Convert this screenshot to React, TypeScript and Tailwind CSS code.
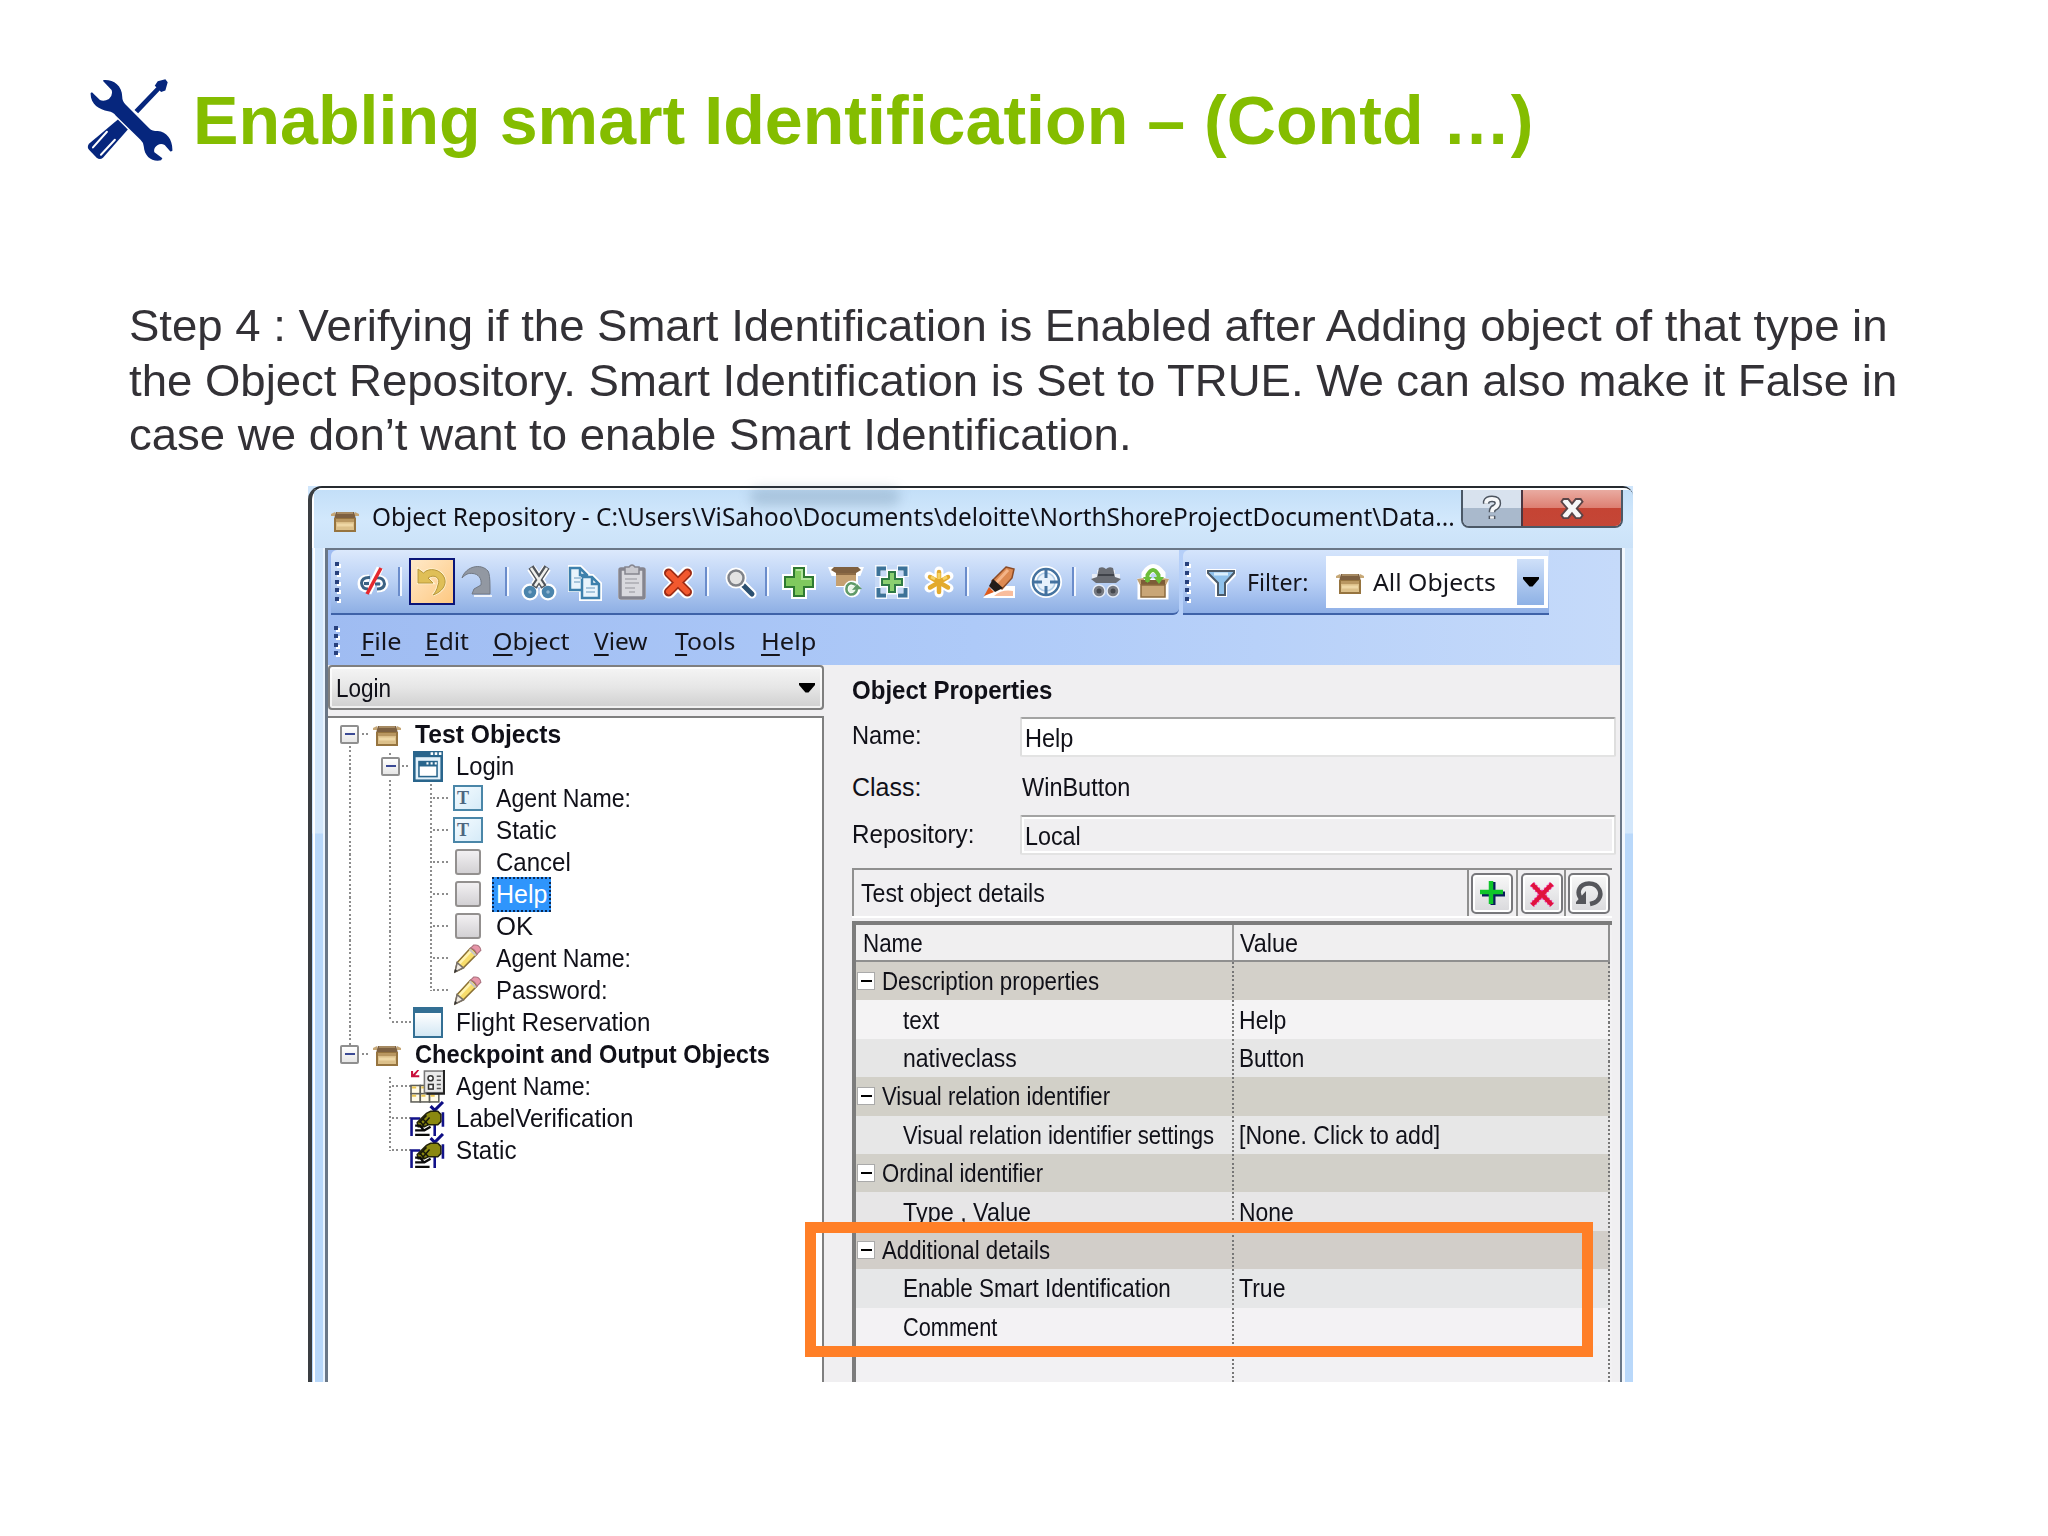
import React, { useLayoutEffect, useRef, useState } from 'react';

/** Text condensed or widened horizontally so that its advance equals `w`. */
function Fit({ w, children, className = '' }: { w: number; children: React.ReactNode; className?: string }) {
  const ref = useRef<HTMLSpanElement>(null);
  const [scale, setScale] = useState(1);
  useLayoutEffect(() => {
    if (ref.current) setScale(w / ref.current.offsetWidth);
  }, [w]);
  return (
    <span className={'block shrink-0 whitespace-pre ' + className} style={{ width: w }}>
      <span ref={ref} className="inline-block origin-left" style={{ transform: `scaleX(${scale})` }}>
        {children}
      </span>
    </span>
  );
}

const Glyph = ({ children }: { children: React.ReactNode }) => (
  <div className="flex w-[46.500px] shrink-0 justify-center">
    <svg viewBox="0 0 34 34" className="h-[34px] w-[34px] overflow-visible">{children}</svg>
  </div>
);

const Sep = ({ className = 'w-[14px]' }: { className?: string }) => (
  <div className={'flex h-[29px] shrink-0 justify-center ' + className}>
    <div className="mr-[4px] w-[4px] border-l-2 border-[#6a8ccb] bg-[#f1f6fe]" />
  </div>
);

const Grip = ({ n }: { n: number }) => (
  <div className="flex shrink-0 flex-col gap-[4.600px]">
    {Array.from({ length: n }, (_, i) => (
      <div key={i} className="h-[4px] w-[4px] bg-[#27407c] shadow-[2px_2px_0_#fff]" />
    ))}
  </div>
);

function Crate({ className = '' }: { className?: string }) {
  return (
    <svg viewBox="0 0 30 22" className={'h-[22px] w-[30px] shrink-0 ' + className}>
      <path d="M5 1L1 3V5H6ZM25 1L29 3V5H24Z" fill="#c7a877" />
      <path d="M6 1H24L26 8H4Z" fill="#7d6142" />
      <path d="M7 2H23" stroke="#a68a62" strokeWidth="2" />
      <rect x="4" y="7" width="22" height="14" fill="#96743f" />
      <rect x="6" y="8" width="18" height="11" fill="#dcc08a" />
      <path d="M6 9.500H24" stroke="#b99761" strokeWidth="3" />
      <path d="M7 14H23" stroke="#eed7a5" strokeWidth="3" />
    </svg>
  );
}

const Arrow = () => (
  <svg viewBox="0 0 16 10" className="h-[10px] w-[16px]">
    <path d="M0 0H16V2L9.5 9.5H6.5L0 2Z" fill="#000" />
  </svg>
);

function ToolsLogo() {
  return (
    <svg viewBox="50 55 260 250" className="h-[83px] w-[87px]" fill="#06267d">
      <path d="M98 58C125 55 155 72 155 108Q155 122 165 132L237 204Q245 212 262 212C290 214 308 240 306 272L300 273L283 254Q272 247 262 254Q248 263 252 276L276 294L272 300C245 306 222 288 220 258Q219 246 210 238L136 166Q128 154 113 152C85 148 58 130 60 97L64 95L88 118Q100 124 115 115Q128 103 123 88L98 62Z" />
      <path d="M192 148L258 80L253 75L262 62L285 56L292 65L285 90L272 94L268 90L203 158Z" />
      <path d="M142 177L172 207L97 292Q88 300 78 292L55 268Q48 260 55 250Z" />
      <path d="M67 261L109 214M91 283L133 238" stroke="#fff" strokeWidth="6" strokeLinecap="round" />
    </svg>
  );
}

function Toolbar() {
  return (
    <div className="flex h-[65px] w-[848px] items-center rounded-tl-[6px] rounded-br-[6px] border-b-2 border-[#3e62a8] bg-linear-to-b from-[#dce9fc] via-[#b9d0f4] to-[#8eafe4] pl-[4px]">
      <Grip n={5} />
      <div className="w-[10.500px] shrink-0" />
      <Glyph>
        <g fill="none" stroke="#fff" strokeWidth="7"><path d="M13 13Q5 13 5 19Q5 24 12 24M21 13Q29 14 29 19Q28 24 21 24M12 28L24 3" /></g>
        <g fill="none" stroke="#3b6284" strokeWidth="3"><path d="M14 12.5Q6 12 5.5 18Q6 24 12 24M8 18.5H13M20 13Q28 12 28.500 19Q28 24 21 24M19 19H24" /></g>
        <path d="M11 29L25 3" stroke="#e5282e" strokeWidth="3.500" />
      </Glyph>
      <Sep className="w-[12.5px]" />
      <div className="flex h-[47px] w-[46.500px] shrink-0 items-center justify-center border-2 border-[#0a1478] bg-linear-to-br from-[#ffe9c8] to-[#fdc880]">
        <svg viewBox="0 0 34 34" className="h-[34px] w-[34px]">
          <path d="M3 4V18H18L13 13C20 8 26 14 23 20C22 25 20 28 18 30C27 27 32 20 29.500 13C26 4 14 2 8.500 8Z" fill="#e2c35c" stroke="#fff3d2" strokeWidth="2.500" />
          <path d="M3 4V18H18L13 13C20 8 26 14 23 20C22 25 20 28 18 30C27 27 32 20 29.500 13C26 4 14 2 8.500 8Z" fill="#dfbf57" stroke="#b8963a" strokeWidth="1" />
        </svg>
      </div>
      <Glyph>
        <path d="M1 13C5 1 20 -2 27 6Q29 9 29 22V29H11L13 24L20 20C21 13 17 9 12 8.500C7 8 5 9 1 13Z" fill="#9298a2" stroke="#727984" />
        <path d="M13 31H31" stroke="#eef3fb" strokeWidth="2" />
      </Glyph>
      <Sep />
      <Glyph>
        <path d="M9 3L21 20M25 3L13 20" stroke="#fff" strokeWidth="9" />
        <g fill="none" stroke="#fff" strokeWidth="9"><circle cx="8" cy="27" r="4" /><circle cx="26" cy="27" r="4" /></g>
        <path d="M9 2L22 22M25 2L12 22" stroke="#50545a" strokeWidth="6" />
        <path d="M9 3L21 21M25 3L13 21" stroke="#f0f0ec" strokeWidth="2.500" />
        <g fill="#8fb4d0" stroke="#4a84ac" strokeWidth="4.500"><circle cx="8" cy="27" r="4" /><circle cx="26" cy="27" r="4" /></g>
      </Glyph>
      <Glyph>
        <g fill="#eaf5fd" stroke="#fff" strokeWidth="6"><path d="M3 3H12L19 10V24H3ZM14 12H24L31 19V33H14Z" /></g>
        <g fill="#e8f4fc" stroke="#3d80ac" strokeWidth="2.500"><path d="M2 3H12L19 10V25H2ZM12 3V10H19" /><path d="M14 12H24L31 19V33H14ZM24 12V19H31" /></g>
        <path d="M6 13H14M6 17H12M18 23H27M18 27H27" stroke="#a7c6dc" strokeWidth="2" />
      </Glyph>
      <Glyph>
        <rect x="3" y="3" width="28" height="32" rx="3" fill="#eef2f9" />
        <rect x="5" y="4" width="24" height="29" rx="1" fill="#d9d9de" stroke="#85858f" strokeWidth="3.500" />
        <path d="M10 2H14Q17 -2 20 2H24V9H10Z" fill="#c9c9cf" stroke="#85858f" strokeWidth="1.500" />
        <path d="M10 14H22M10 18H24M10 23H20M14 27H20" stroke="#aaaab1" strokeWidth="1.500" />
      </Glyph>
      <Glyph>
        <path d="M8 8L26 27M26 8L8 27" stroke="#fff" strokeWidth="13" strokeLinecap="round" />
        <path d="M7.500 8L26.500 27M26.500 8L7.500 27" stroke="#9c2c16" strokeWidth="9" strokeLinecap="round" />
        <path d="M8 8.500L26 26.500M26 8.500L8 26.500" stroke="#f2582e" strokeWidth="6" strokeLinecap="round" />
      </Glyph>
      <Sep />
      <Glyph>
        <path d="M20 19L30 29" stroke="#fff" strokeWidth="9" strokeLinecap="round" />
        <path d="M20 19L30 29" stroke="#2c5070" strokeWidth="5" strokeLinecap="round" />
        <circle cx="14" cy="13" r="10.500" fill="#fff" />
        <circle cx="14" cy="13" r="7.500" fill="#e3e3e3" stroke="#7f8288" strokeWidth="2.500" />
      </Glyph>
      <Sep />
      <Glyph>
        <path d="M11.500 2.500H22.500V11.500H31.500V22.500H22.500V31.500H11.500V22.500H2.500V11.500H11.500Z" fill="#fff" stroke="#fff" strokeWidth="5" />
        <path d="M12 3H22V12H31V22H22V31H12V22H3V12H12Z" fill="#80c95e" stroke="#2f7a31" strokeWidth="2" />
        <path d="M14 5H20V14H29" fill="none" stroke="#b3e59c" strokeWidth="2" />
      </Glyph>
      <Glyph>
        <path d="M2 4L32 4L30 9H27V20H9V9H4Z" fill="#fff" stroke="#fff" strokeWidth="4" />
        <path d="M5 2H29L32 5L27 8H7L2 5Z" fill="#7f6040" />
        <rect x="7" y="8" width="20" height="13" fill="#c5a071" />
        <path d="M7 9H27" stroke="#8d6b45" strokeWidth="2" />
        <circle cx="23" cy="24" r="6" fill="#eaf5e7" stroke="#fff" strokeWidth="5" />
        <path d="M27 20Q21 16 18 21Q16 27 21 29.500Q27 30 28 24" fill="none" stroke="#5f9a68" strokeWidth="2.500" />
        <path d="M23 25L33 24L28 19Z" fill="#5f9a68" />
      </Glyph>
      <Glyph>
        <rect x="0" y="0" width="34" height="34" fill="#f2f7fe" />
        <path d="M12 0H22V6H28V12H34V22H28V28H22V34H12V28H6V22H0V12H6V6H12Z" fill="#c6d9f6" />
        <path d="M3.500 11V3.500H11M23 3.500H30.500V11M30.500 23V30.500H23M11 30.500H3.500V23" fill="none" stroke="#3c7298" strokeWidth="4" />
        <path d="M14 7H20V14H27V20H20V27H14V20H7V14H14Z" fill="#8bd070" stroke="#fff" strokeWidth="5" />
        <path d="M14 7H20V14H27V20H20V27H14V20H7V14H14Z" fill="#8bd070" stroke="#2f7a45" strokeWidth="2" />
      </Glyph>
      <Glyph>
        <path d="M17 6V28M7 11L27 23M27 11L7 23" stroke="#fff" strokeWidth="9" strokeLinecap="round" />
        <path d="M17 7V27M8 12L26 22.500M26 12L8 22.500" stroke="#e3aa2c" strokeWidth="4.500" strokeLinecap="round" />
        <path d="M17 8V14M9 12L13 14M25 12L21 14" stroke="#f6d264" strokeWidth="3" />
      </Glyph>
      <Sep />
      <Glyph>
        <path d="M1 33L12 21H33V33Z" fill="#fff" />
        <path d="M12 31Q20 24 31 26V31Z" fill="#f9bd9d" />
        <path d="M24 2L32 4L30 13L20 24L10 16Z" fill="#dd8a52" stroke="#8b4b27" strokeWidth="1.500" />
        <path d="M26 5L14 18" stroke="#f4b487" strokeWidth="3" />
        <path d="M11 14L21 23L13 27L7 21Z" fill="#221c18" />
        <path d="M7 22L12 27L2 31Z" fill="#e05b1c" />
      </Glyph>
      <Glyph>
        <circle cx="17" cy="17" r="13" fill="#e6f1fc" stroke="#fff" strokeWidth="6" />
        <circle cx="17" cy="17" r="13" fill="none" stroke="#44729f" strokeWidth="2.500" />
        <circle cx="17" cy="17" r="9" fill="none" stroke="#b3cfe9" strokeWidth="1.500" />
        <path d="M17 4V13M17 21V30M4 17H13M21 17H30" stroke="#44729f" strokeWidth="3" />
      </Glyph>
      <Sep />
      <Glyph>
        <path d="M3 12H31M8 8H26" stroke="#e9eef7" strokeWidth="6" />
        <path d="M8 12L10 3Q14 1 17 4Q20 1 24 3L26 12L32 14L27 18H7L2 14Z" fill="#696c72" />
        <path d="M9 10H25" stroke="#3f4248" strokeWidth="2" />
        <g fill="#777a81" stroke="#e4ebf6" strokeWidth="1.500"><circle cx="10" cy="26" r="6" /><circle cx="24" cy="26" r="6" /></g>
        <g fill="#45484e"><circle cx="10" cy="26" r="2.500" /><circle cx="24" cy="26" r="2.500" /></g>
      </Glyph>
      <Glyph>
        <path d="M3 15H31V33H3Z" fill="#fff" stroke="#fff" strokeWidth="3" />
        <path d="M10 18V9Q17 -2 25 9V17" fill="none" stroke="#fff" strokeWidth="9" />
        <path d="M1 14L8 13V20H4ZM33 14L26 13V20H30Z" fill="#c3a170" />
        <rect x="5" y="15" width="24" height="6" fill="#7d5c38" />
        <path d="M11.500 17V10Q17 0 22.500 10V14" fill="none" stroke="#6cbd3a" strokeWidth="4" />
        <path d="M17.500 12H28L23 19ZM7 12H16L11.500 18Z" fill="#6cbd3a" />
        <rect x="5" y="20" width="24" height="12" fill="#c9a677" stroke="#8b6a3e" strokeWidth="1.500" />
      </Glyph>
    </div>
  );
}

function FilterBar() {
  return (
    <div className="ml-[4px] flex h-[65px] w-[366px] items-center rounded-tl-[6px] border-b-2 border-[#3e62a8] bg-linear-to-b from-[#d5e5fc] via-[#b9d0f6] to-[#8eafe6] pl-[2px]">
      <Grip n={5} />
      <svg viewBox="0 0 30 28" className="ml-[17px] mt-[3px] h-[28px] w-[30px] overflow-visible">
        <path d="M2 2H28V6L19 15V26H11V15L2 6Z" fill="#fff" stroke="#fff" strokeWidth="4" />
        <path d="M2 2H28V4L19 14V26H12V14L2 4Z" fill="#8fc2ec" stroke="#4b5a68" strokeWidth="2" />
        <path d="M8 5H22" stroke="#d9effd" strokeWidth="3" />
      </svg>
      <Fit w={61} className="ml-[11px]">Filter:</Fit>
      <div className="ml-[18px] flex h-[52px] w-[222px] items-center bg-white">
        <Crate className="mt-[4px] ml-[9px]" />
        <Fit w={123} className="ml-[8px]">All Objects</Fit>
        <div className="ml-[21px] flex h-[46px] w-[27px] shrink-0 items-center justify-center bg-linear-to-b from-[#cfe0f9] to-[#8eb1e5]"><Arrow /></div>
      </div>
    </div>
  );
}

const menus: [string, number, string][] = [
  ['File', 40, 'ml-[23px]'],
  ['Edit', 44, 'ml-[24px]'],
  ['Object', 76, 'ml-[24px]'],
  ['View', 54, 'ml-[25px]'],
  ['Tools', 60, 'ml-[27px]'],
  ['Help', 55, 'ml-[26px]'],
];

const Minus = () => (
  <div className="flex h-[19px] w-[19px] shrink-0 items-center justify-center rounded-[2px] border-2 border-[#8f8f8f] bg-linear-to-b from-white to-[#e6e6e6]">
    <div className="h-[2px] w-[10px] bg-[#3b4a95]" />
  </div>
);

const DialogIcon = () => (
  <svg viewBox="0 0 29 30" className="h-[31px] w-[30px] shrink-0">
    <rect width="29" height="30" fill="#29658c" />
    <path d="M17 2.500h2.500M21 2.500h2.500M25 2.500h2.500" stroke="#fff" strokeWidth="2.500" />
    <rect x="2.500" y="6" width="24" height="21.500" fill="#e4f2fb" />
    <rect x="5" y="9.500" width="19" height="16" fill="#29658c" />
    <rect x="6.500" y="15" width="16" height="9" fill="#fff" />
    <path d="M13 12h2M17 12h2M21 12h2" stroke="#fff" strokeWidth="2" />
  </svg>
);
const WindowIcon = () => (
  <div className="h-[31px] w-[30px] shrink-0 border-2 border-t-[6px] border-[#336f94] bg-linear-to-b from-white to-[#d3e7f4]" />
);
const TextIcon = () => (
  <div className="flex h-[26px] w-[30px] shrink-0 items-center border-2 border-[#4a86a8] bg-linear-to-br from-[#f4fbff] to-[#d6ebf8] pl-[2px] font-['Liberation_Serif',serif] text-[18px] leading-none font-bold text-[#4d6680]">
    T
  </div>
);
const ButtonIcon = () => (
  <div className="mr-[2px] ml-[2px] h-[26px] w-[26px] shrink-0 rounded-[3px] border-2 border-[#93908f] bg-linear-to-b from-[#f2f0f2] to-[#d3d1d4]" />
);
const PencilIcon = () => (
  <svg viewBox="0 0 29 30" className="h-[31px] w-[30px] shrink-0">
    <path d="M2 28L4 19L17 5Q21 6 23 11L10 24Z" fill="#f8dd6c" stroke="#8b7135" strokeWidth="1.500" />
    <path d="M6 20L18 7" stroke="#fff3b0" strokeWidth="2.500" />
    <path d="M2 28L4 19L10 24Z" fill="#f3ece2" stroke="#77706a" strokeWidth="1.500" />
    <path d="M1 29L4 27L2 25Z" fill="#333" />
    <path d="M17 5L20 2Q26 1 27 7L23 11Q22 6 17 5Z" fill="#e795a8" stroke="#a9707d" />
    <path d="M16 6L22 12" stroke="#c9c6c6" strokeWidth="2" />
  </svg>
);
const OutputIcon = () => (
  <svg viewBox="0 0 34 32" className="h-[33px] w-[35px] shrink-0">
    <path d="M1 7V1H3V4L7 0H9L5 5H9V7Z" fill="#c90f3c" />
    <g fill="#fffbe9" stroke="#5e5e58" strokeWidth="1.500"><rect x="1" y="15" width="9" height="8" /><rect x="10" y="15" width="9" height="8" /><rect x="1" y="23" width="9" height="8" /><rect x="10" y="23" width="9" height="8" /><rect x="19" y="23" width="9" height="8" /></g>
    <path d="M2 17H6M11 17H15M2 25H6M11 25H15M20 25H24" stroke="#ecc64e" strokeWidth="2" />
    <rect x="14" y="1" width="19" height="21" fill="#e9e9e9" stroke="#777" strokeWidth="1.500" />
    <path d="M33 0V23H16" fill="none" stroke="#222" strokeWidth="2" />
    <g fill="#fff" stroke="#333" strokeWidth="1.500"><circle cx="20" cy="8" r="2.500" /><rect x="18" y="14" width="4.500" height="4.500" /></g>
    <path d="M26 6H30M26 10H30M26 14H30M26 18H30" stroke="#555" strokeWidth="1.500" />
  </svg>
);
const CheckIcon = () => (
  <svg viewBox="0 0 34 34" className="h-[35px] w-[35px] shrink-0">
    <path d="M20 5L24 9L32 1" fill="none" stroke="#0d0d84" strokeWidth="3" />
    <path d="M10 17H1.500V34M24 21V34M32 11V25" fill="none" stroke="#12128a" strokeWidth="2.500" />
    <path d="M7 21L16 12L20 10H27L30 13V20L27 23H18L14 25H8Z" fill="#8a8810" stroke="#24240a" strokeWidth="1.500" />
    <path d="M9 21L16 14M12 24L19 16M12 17L18 23M10 20L14 25" stroke="#17170a" strokeWidth="1.500" />
    <path d="M5 24H10L13 28M5 28.500H14L20 25M5 33H19" fill="none" stroke="#0a0a0a" strokeWidth="2.200" />
  </svg>
);

type Node = { level: 0 | 1 | 2; icon: React.ReactNode; text: string; w: number; toggle?: boolean; bold?: boolean; selected?: boolean };
const tree: Node[] = [
  { level: 0, toggle: true, icon: <Crate />, text: 'Test Objects', w: 146, bold: true },
  { level: 1, toggle: true, icon: <DialogIcon />, text: 'Login', w: 58 },
  { level: 2, icon: <TextIcon />, text: 'Agent Name:', w: 135 },
  { level: 2, icon: <TextIcon />, text: 'Static', w: 61 },
  { level: 2, icon: <ButtonIcon />, text: 'Cancel', w: 75 },
  { level: 2, icon: <ButtonIcon />, text: 'Help', w: 51, selected: true },
  { level: 2, icon: <ButtonIcon />, text: 'OK', w: 37 },
  { level: 2, icon: <PencilIcon />, text: 'Agent Name:', w: 135 },
  { level: 2, icon: <PencilIcon />, text: 'Password:', w: 112 },
  { level: 1, icon: <WindowIcon />, text: 'Flight Reservation', w: 194 },
  { level: 0, toggle: true, icon: <Crate />, text: 'Checkpoint and Output Objects', w: 355, bold: true },
  { level: 1, icon: <OutputIcon />, text: 'Agent Name:', w: 135 },
  { level: 1, icon: <CheckIcon />, text: 'LabelVerification', w: 177 },
  { level: 1, icon: <CheckIcon />, text: 'Static', w: 61 },
];

const dotsY = 'absolute w-[2px] bg-[repeating-linear-gradient(to_bottom,#8d8d8d_0_2px,transparent_2px_4.300px)] ';
const dotsX = 'h-[2px] shrink-0 bg-[repeating-linear-gradient(to_right,#8d8d8d_0_2px,transparent_2px_4.300px)] ';

/** Everything left of a row's icon: the expander box and the dotted connector. */
function Lead({ n }: { n: Node }) {
  if (n.level === 0)
    return <div className="flex w-[44px] shrink-0 items-center pl-[12px]"><Minus /><div className={dotsX + 'ml-[3px] w-[7px]'} /></div>;
  if (n.level === 1)
    return (
      <div className="flex w-[85px] shrink-0 items-center pl-[53px]">
        {n.toggle ? <><Minus /><div className={dotsX + 'ml-[2px] w-[9px]'} /></> : <div className={dotsX + 'ml-[11px] w-[19px]'} />}
      </div>
    );
  return <div className="flex w-[125px] shrink-0 items-center pl-[105px]"><div className={dotsX + 'w-[17px]'} /></div>;
}

function TreeRow({ n }: { n: Node }) {
  return (
    <div className="flex h-[32.040px] items-center">
      <Lead n={n} />
      <div className={n.level === 0 ? 'w-[43px] shrink-0 pt-[4px]' : 'w-[43px] shrink-0'}>
        <div className={n.level === 1 && !n.toggle && n.text !== 'Flight Reservation' ? '-ml-[3px] flex' : 'flex'}>{n.icon}</div>
      </div>
      {n.selected ? (
        <div className="-ml-[4px] flex h-[35px] shrink-0 items-center bg-[#2f95fc] pl-[4px] pr-[4px] text-white outline-2 -outline-offset-2 outline-dotted outline-[#0a2a55]">
          <Fit w={n.w}>{n.text}</Fit>
        </div>
      ) : (
        <Fit w={n.w} className={n.bold ? 'font-bold' : ''}>{n.text}</Fit>
      )}
    </div>
  );
}

type Row = { name: string; w: number; value?: string; vw?: number; cat?: boolean; bg: string };
const rows: Row[] = [
  { name: 'Description properties', w: 217, cat: true, bg: 'bg-[#d3d0c9]' },
  { name: 'text', w: 36, value: 'Help', vw: 47, bg: 'bg-[#f4f3f4]' },
  { name: 'nativeclass', w: 114, value: 'Button', vw: 65, bg: 'bg-[#e6e6e6]' },
  { name: 'Visual relation identifier', w: 228, cat: true, bg: 'bg-[#d2d0c8]' },
  { name: 'Visual relation identifier settings', w: 311, value: '[None. Click to add]', vw: 201, bg: 'bg-[#e7e7e7]' },
  { name: 'Ordinal identifier', w: 161, cat: true, bg: 'bg-[#d2d0c9]' },
  { name: 'Type , Value', w: 128, value: 'None', vw: 55, bg: 'bg-[#e7e6e7]' },
  { name: 'Additional details', w: 168, cat: true, bg: 'bg-[#d2cec9]' },
  { name: 'Enable Smart Identification', w: 268, value: 'True', vw: 46, bg: 'bg-[#e6e7e8]' },
  { name: 'Comment', w: 94, bg: 'bg-[#f3f2f4]' },
];

const dotCol = 'h-full w-[2px] shrink-0 bg-[repeating-linear-gradient(to_bottom,#777_0_2px,transparent_2px_4.300px)]';

function PropertyTable() {
  return (
    <div className="mt-[5px] h-[463px] w-[760px] overflow-hidden border-t-[4px] border-l-[4px] border-[#7c7c7c] bg-[#f2f1f3]">
      <div className="flex h-[37px] w-[754px] items-center border-r-2 border-b-2 border-[#8f8f8f] bg-[#f0eff0]">
        <div className="flex h-full w-[378px] items-center border-r-2 border-[#9a9a9a] pl-[7px]"><Fit w={60}>Name</Fit></div>
        <Fit w={58} className="ml-[6px]">Value</Fit>
      </div>
      {rows.map((r) => (
        <div key={r.name} className={'flex h-[38.400px] w-[754px] items-center ' + r.bg}>
          <div className="flex h-full w-[376px] items-center">
            {r.cat ? (
              <div className="mr-[7px] ml-px flex h-[18px] w-[18px] shrink-0 items-center justify-center border border-[#aaa] bg-white"><div className="h-[2px] w-[11px] bg-black" /></div>
            ) : (
              <div className="w-[47px] shrink-0" />
            )}
            <Fit w={r.w}>{r.name}</Fit>
          </div>
          <div className={dotCol} />
          <div className="flex-1 pl-[5px]">{r.value && <Fit w={r.vw!}>{r.value}</Fit>}</div>
          <div className={dotCol} />
        </div>
      ))}
      <div className="flex h-[40px] w-[754px] justify-between pl-[376px]"><div className={dotCol} /><div className={dotCol} /></div>
    </div>
  );
}

const ToolButton = ({ cell, children }: { cell: string; children: React.ReactNode }) => (
  <div className={'flex h-[46px] shrink-0 items-center border-l-2 border-[#8f8f8f] ' + cell}>
    <div className="flex h-[41px] w-[42px] items-center justify-center rounded-[5px] border-2 border-[#77777b] bg-linear-to-b from-[#f8f8f8] to-[#d9d9dc] inset-ring-2 inset-ring-white">
      <svg viewBox="0 0 28 28" className="h-[28px] w-[28px]">{children}</svg>
    </div>
  </div>
);

function PropertiesPane() {
  return (
    <div className="h-[717px] w-[796px] shrink-0 pl-[28px]">
      <Fit w={200} className="h-[52px] pt-[8px] leading-[34px] font-bold">Object Properties</Fit>
      <div className="flex h-[40px] items-center">
        <Fit w={70} className="pb-[4px]">Name:</Fit>
        <div className="ml-[98px] flex h-[40px] w-[596px] items-center rounded-[2px] border-2 border-x-[#dedede] border-t-[#a3a3a3] border-b-[#e3e3e3] bg-white pt-px pl-[3px]"><Fit w={48}>Help</Fit></div>
      </div>
      <div className="flex h-[58px] items-center pt-px">
        <Fit w={69}>Class:</Fit>
        <Fit w={108} className="ml-[101px]">WinButton</Fit>
      </div>
      <div className="flex h-[40px] items-center">
        <Fit w={122} className="pb-[3px]">Repository:</Fit>
        <div className="ml-[46px] h-[40px] w-[596px] rounded-[2px] border-2 border-x-[#dedede] border-t-[#a3a3a3] border-b-[#e3e3e3] bg-white">
          <div className="flex h-[36px] items-center border-2 border-white bg-[#f0eff1] pl-px pt-px"><Fit w={56}>Local</Fit></div>
        </div>
      </div>
      <div className="mt-[13px] flex h-[48px] w-[760px] items-center border-t-2 border-l-2 border-[#8f8f8f] shadow-[0_2px_0_#fff]">
        <Fit w={184} className="ml-[7px]">Test object details</Fit>
        <div className="ml-auto flex">
          <ToolButton cell="w-[49px] pl-[2px]">
            <path d="M15 3V26M4 15H27" stroke="#0a1c5c" strokeWidth="5" />
            <path d="M13 2V25M2 13H25" stroke="#0fc52a" strokeWidth="4.500" />
          </ToolButton>
          <ToolButton cell="w-[48px] pl-[3px]">
            <path d="M4 5L24 26M24 5L4 26" stroke="#f03ab4" strokeWidth="6" strokeDasharray="2 1.500" />
            <path d="M4 5L24 26M24 5L4 26" stroke="#e0123c" strokeWidth="4" />
          </ToolButton>
          <ToolButton cell="w-[48px] pl-[2px]">
            <path d="M7 21C0 13 5 4.500 14 4.500C24 4.500 29 15 22 22Q20 24 15 25" fill="none" stroke="#55565b" strokeWidth="4.500" />
            <path d="M1 25V23L11 12V25Z" fill="#55565b" />
          </ToolButton>
        </div>
      </div>
      <PropertyTable />
    </div>
  );
}

function RepositoryWindow() {
  return (
    <div className="relative h-[896px] w-[1325px] bg-[#cfe5fb]">
      <div className="flex h-full flex-col overflow-hidden rounded-tl-[14px] rounded-tr-[10px] border-t-2 border-l-[4px] border-t-[#262b30] border-l-[#3a3e42] bg-linear-to-b from-[#d3e7fb] from-[345px] to-[#b9d8fa] to-[346px]">
        <div className="flex h-[60px] shrink-0 border-t-2 border-l-2 border-white bg-linear-to-b from-[#c3dff8] via-[#d2e8fc] to-[#cbe2f8] pl-[16px]">
          <Crate className="mt-[21px]" />
          <Fit w={1083} className="mt-[11px] ml-[12px] font-['Noto_Sans','Open_Sans',sans-serif] text-[24.500px] leading-[32px]">
            Object Repository - C:\Users\ViSahoo\Documents\deloitte\NorthShoreProjectDocument\Data...
          </Fit>
          <div className="ml-[6px] flex h-[38px] w-[162px] shrink-0 overflow-hidden rounded-b-[8px] border-x-2 border-b-2 border-[#4b5866]">
            <div className="flex w-[60px] items-center justify-center border-r-2 border-[#4b3640] bg-linear-to-b from-[#d8e2ee] from-50% to-[#a9b9cc] to-50%">
              <svg viewBox="0 0 20 28" className="h-[27px] w-[20px]">
                <path d="M4 9V7Q5 4 10 4Q16 4 16 8.500Q16 11 13 13Q10 14 10 18M10 21.500V25" fill="none" stroke="#4d5560" strokeWidth="7" />
                <path d="M4 9V7Q5 4 10 4Q16 4 16 8.500Q16 11 13 13Q10 14 10 18M10 22V24.500" fill="none" stroke="#f6f8fa" strokeWidth="4" />
              </svg>
            </div>
            <div className="flex flex-1 bg-linear-to-b from-[#e9aba1] via-[#dd7f72] via-50% to-[#d98a80]">
              <div className="flex h-full w-full items-center justify-center bg-linear-to-b from-transparent from-50% to-[#bf3524]/80 to-50%">
                <svg viewBox="0 0 26 24" className="h-[23px] w-[26px]">
                  <path d="M4 2H9L13 7L17 2H22L24 5L18 12L24 19L22 22H17L13 17L9 22H4L2 19L8 12L2 5Z" fill="#f7f7f7" stroke="#5a4548" strokeWidth="2" />
                </svg>
              </div>
            </div>
          </div>
        </div>
        <div className="ml-px flex min-h-0 flex-1">
          <div className="w-[12px] shrink-0 border-x-2 border-l-white border-r-[#e8f3fe]" />
          <div className="flex w-[1297px] shrink-0 flex-col border-t-2 border-r-2 border-l-[3px] border-[#6a7787] bg-[#f0eff1]">
            <div className="h-[115px] shrink-0 bg-linear-to-r from-[#9fbcf2] via-[#aecaf8] to-[#c5dafa] pl-[3px] font-['Noto_Sans','Open_Sans',sans-serif] text-[24px] text-[#15151c]">
              <div className="flex">
                <Toolbar />
                <FilterBar />
              </div>
              <div className="flex h-[50px] items-center pt-px pl-[3px]">
                <Grip n={4} />
                {menus.map(([t, w, ml]) => (
                  <Fit key={t} w={w} className={ml}>
                    <span className="underline decoration-2 underline-offset-[4px]">{t[0]}</span>{t.slice(1)}
                  </Fit>
                ))}
              </div>
            </div>
            <div className="flex">
              <div className="w-[496px] shrink-0">
                <div className="flex h-[45px] w-[496px] items-center justify-between rounded-[4px] border-2 border-[#7f7f7f] bg-linear-to-b from-[#f5f5f5] via-[#e6e6e6] to-[#cfcfcf] pr-[7px] pl-[6px] inset-ring-2 inset-ring-white/70">
                  <Fit w={55}>Login</Fit>
                  <Arrow />
                </div>
                <div className="relative mt-[6px] h-[670px] w-[496px] border-t-2 border-r-2 border-[#7f7f7f] bg-white">
                  <div className={dotsY + 'top-[28px] left-[21px] h-[300px]'} />
                  <div className={dotsY + 'top-[35px] left-[61px] h-[5px]'} />
                  <div className={dotsY + 'top-[62px] left-[61px] h-[240px]'} />
                  <div className={dotsY + 'top-[66px] left-[102px] h-[207px]'} />
                  <div className={dotsY + 'top-[359px] left-[61px] h-[74px]'} />
                  {tree.map((n, i) => <TreeRow key={i} n={n} />)}
                </div>
              </div>
              <PropertiesPane />
            </div>
          </div>
          <div className="w-[3px] shrink-0 bg-[#f2f7fd]" />
        </div>
      </div>
      <div className="absolute top-[2px] left-[442px] h-[18px] w-[150px] rounded-full bg-[#4f6f8c]/25 blur-[6px]" />
      <div className="absolute top-[736px] left-[497px] h-[135px] w-[788px] border-[11px] border-[#ff7f27]" />
    </div>
  );
}

export default function App() {
  return (
    <div className="flex h-[1536px] w-[2048px] flex-col overflow-hidden bg-white font-['Liberation_Sans',Arial,sans-serif] text-[25px] leading-[36px] text-[#101018]">
      <header className="flex h-[160px] shrink-0 pl-[87px]">
        <div className="pt-[79px]"><ToolsLogo /></div>
        <Fit w={1340} className="mt-[80px] ml-[19px] text-[68px] leading-[80px] font-bold text-[#84bd00]">
          Enabling smart Identification – (Contd …)
        </Fit>
      </header>
      <section className="mt-[139px] ml-[129px] h-[187px] shrink-0 text-[45px] leading-[54.700px] text-[#333136]">
        <Fit w={1759}>Step 4 : Verifying if the Smart Identification is Enabled after Adding object of that type in</Fit>
        <Fit w={1768}>the Object Repository. Smart Identification is Set to TRUE. We can also make it False in</Fit>
        <Fit w={1003}>case we don’t want to enable Smart Identification.</Fit>
      </section>
      <main className="ml-[308px]">
        <RepositoryWindow />
      </main>
    </div>
  );
}
